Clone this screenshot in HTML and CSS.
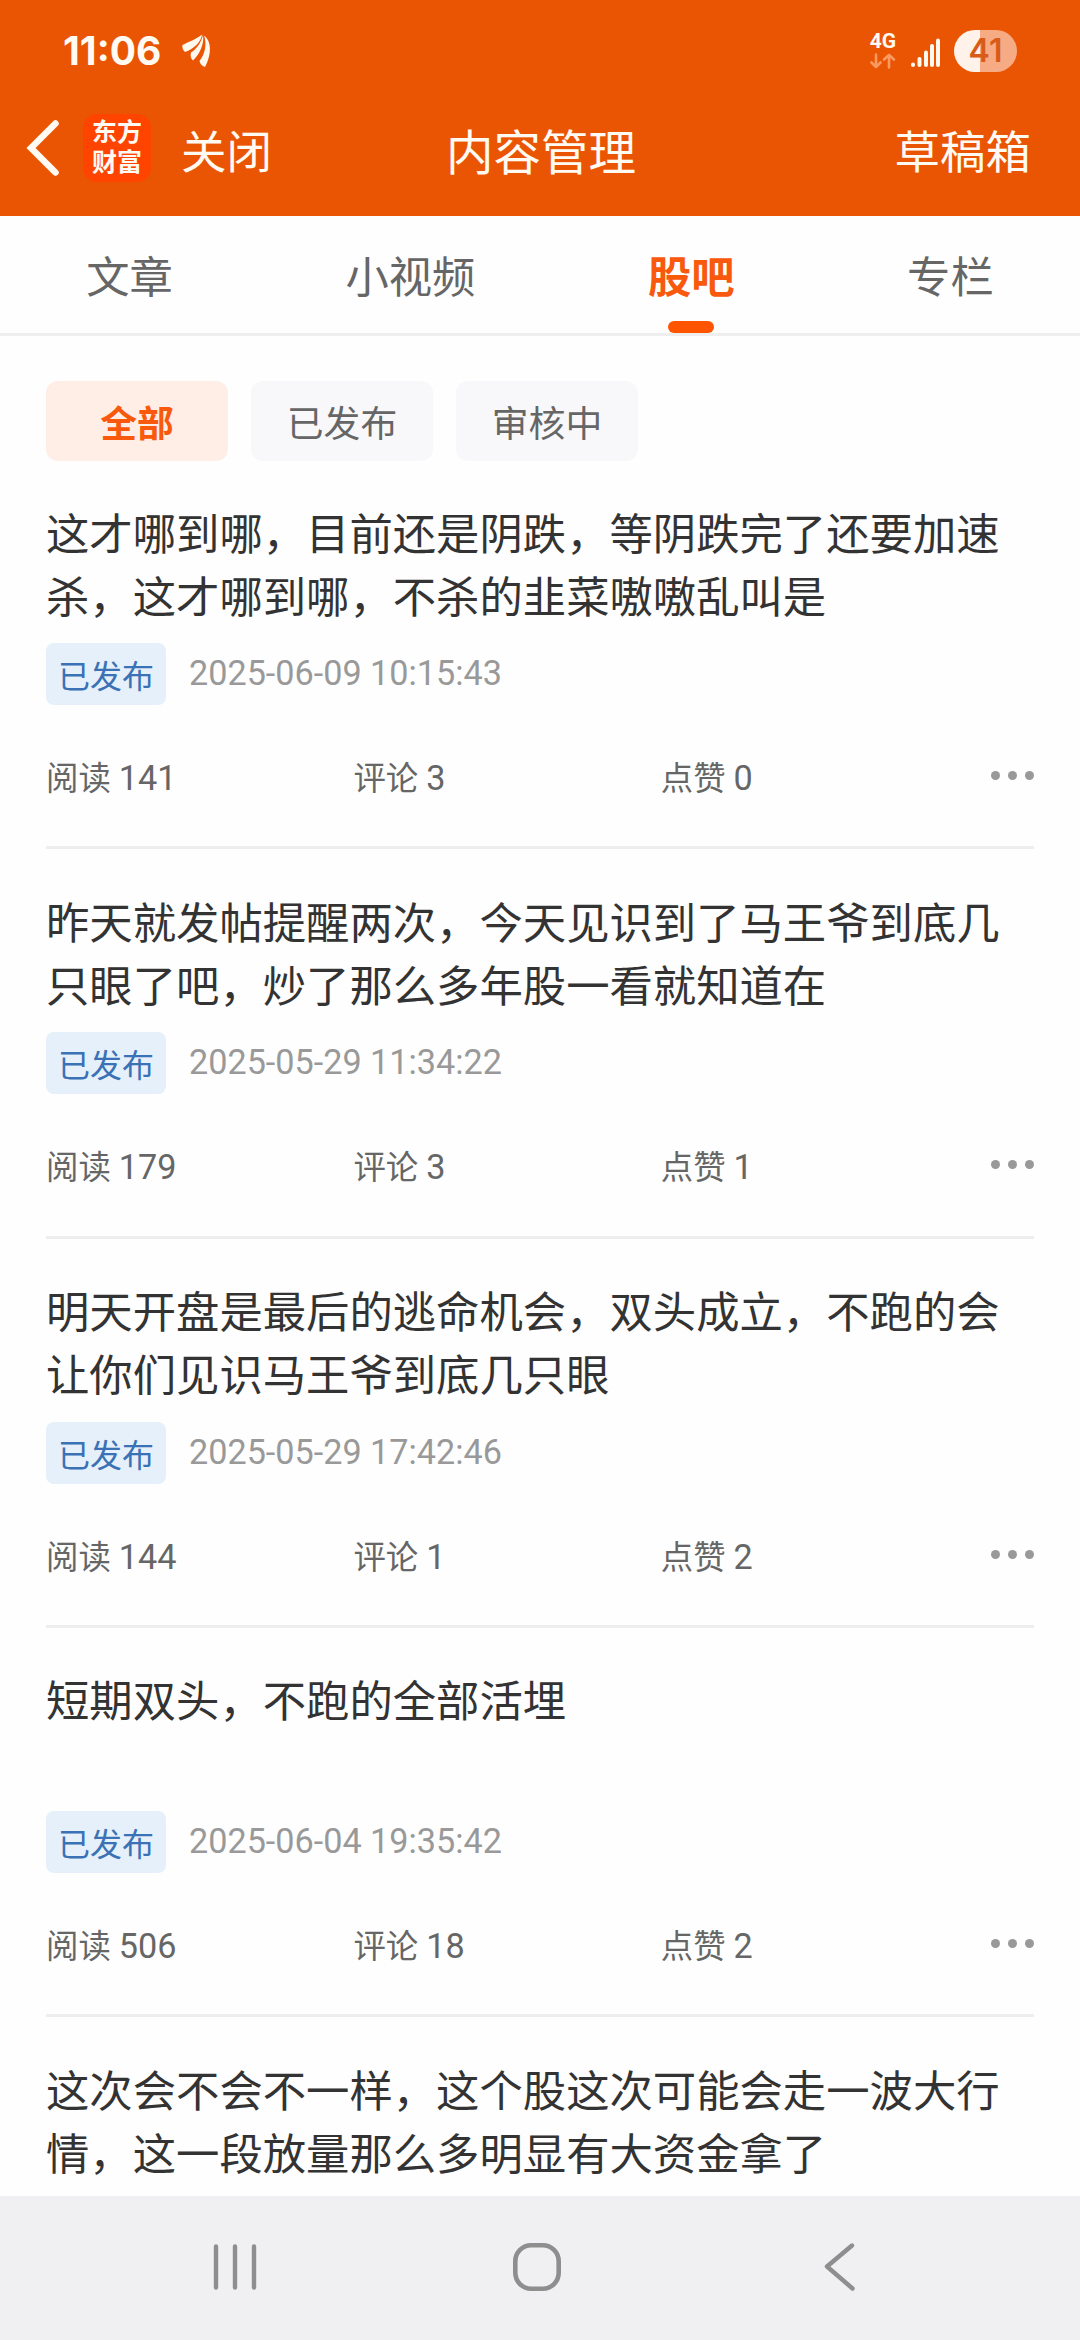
FILE: index.html
```html
<!DOCTYPE html>
<html lang="zh-CN">
<head>
    <meta charset="UTF-8">
    <meta name="viewport" content="width=device-width, initial-scale=1.0">
    <title>内容管理</title>
    <link rel="stylesheet" href="styles.css">
</head>
<body>
    <header class="header">
        <div class="status-bar">
            <span class="time">11:06</span>
            <svg class="plane" width="30" height="34" viewBox="0 0 30 34">
                <path fill="#fff8ee" d="M0.500 11C6 8 13 6 20 0.500C19 8 12 15 3 18C0.500 16 0 13 0.500 11Z"/>
                <path fill="#fff8ee" d="M21 1C22.500 9 18 20 11 26.500C9 25 8 22 9 18.500C14 15.500 19 9 21 1Z"/>
                <path fill="#fff8ee" d="M22.200 1.500C29.500 7 30 20 23 33C20 32 18 30 17.500 27C23 20 25 11 22.200 1.500Z"/>
            </svg>
            <div class="status-right">
                <div class="network">
                    <span>4G</span>
                    <svg width="26" height="16" viewBox="0 0 26 16" fill="none" stroke="#f99a62" stroke-width="2.6" stroke-linecap="round" stroke-linejoin="round">
                        <path d="M6 1.500V14M1.500 9.500L6 14L10.500 9.500"/>
                        <path d="M19 14.500V2M14 6.500L19 2L24 6.500"/>
                    </svg>
                </div>
                <svg class="signal" width="30" height="30" viewBox="0 0 30 30" fill="#fff8ee">
                    <rect x="0" y="24.500" width="4" height="4.500" rx="2"/>
                    <rect x="6.500" y="19" width="4" height="10" rx="2"/>
                    <rect x="13" y="12.500" width="4" height="16.500" rx="2"/>
                    <rect x="19" y="6" width="4" height="23" rx="2"/>
                    <rect x="25" y="0.500" width="4" height="28.500" rx="2"/>
                </svg>
                <div class="battery">41</div>
            </div>
        </div>
        <div class="title-bar">
            <div class="title-left">
                <svg width="34" height="58" viewBox="0 0 34 58" fill="none" stroke="#fffaf2" stroke-width="6.500" stroke-linecap="round" stroke-linejoin="miter">
                    <path d="M29.500 4.500L5 29L29.500 53.500"/>
                </svg>
                <div class="logo"><span>东方</span><span>财富</span></div>
                <span class="close">关闭</span>
            </div>
            <h1>内容管理</h1>
            <span class="drafts">草稿箱</span>
        </div>
    </header>

    <nav class="tabs">
        <span class="tab">文章</span>
        <span class="tab">小视频</span>
        <span class="tab active">股吧</span>
        <span class="tab">专栏</span>
    </nav>

    <main class="content">
        <div class="filters">
            <span class="filter active">全部</span>
            <span class="filter">已发布</span>
            <span class="filter">审核中</span>
        </div>

        <article class="post">
            <p class="post-title">这才哪到哪，目前还是阴跌，等阴跌完了还要加速杀，这才哪到哪，不杀的韭菜嗷嗷乱叫是</p>
            <div class="post-info"><span class="badge">已发布</span><span class="date">2025-06-09 10:15:43</span></div>
            <div class="stats">
                <span>阅读 <b>141</b></span><span>评论 <b>3</b></span><span>点赞 <b>0</b></span>
                <div class="more"><i></i><i></i><i></i></div>
            </div>
        </article>

        <article class="post">
            <p class="post-title">昨天就发帖提醒两次，今天见识到了马王爷到底几只眼了吧，炒了那么多年股一看就知道在</p>
            <div class="post-info"><span class="badge">已发布</span><span class="date">2025-05-29 11:34:22</span></div>
            <div class="stats">
                <span>阅读 <b>179</b></span><span>评论 <b>3</b></span><span>点赞 <b>1</b></span>
                <div class="more"><i></i><i></i><i></i></div>
            </div>
        </article>

        <article class="post">
            <p class="post-title">明天开盘是最后的逃命机会，双头成立，不跑的会让你们见识马王爷到底几只眼</p>
            <div class="post-info"><span class="badge">已发布</span><span class="date">2025-05-29 17:42:46</span></div>
            <div class="stats">
                <span>阅读 <b>144</b></span><span>评论 <b>1</b></span><span>点赞 <b>2</b></span>
                <div class="more"><i></i><i></i><i></i></div>
            </div>
        </article>

        <article class="post">
            <p class="post-title">短期双头，不跑的全部活埋</p>
            <div class="post-info"><span class="badge">已发布</span><span class="date">2025-06-04 19:35:42</span></div>
            <div class="stats">
                <span>阅读 <b>506</b></span><span>评论 <b>18</b></span><span>点赞 <b>2</b></span>
                <div class="more"><i></i><i></i><i></i></div>
            </div>
        </article>

        <article class="post">
            <p class="post-title">这次会不会不一样，这个股这次可能会走一波大行情，这一段放量那么多明显有大资金拿了</p>
        </article>
    </main>

    <footer class="nav-bar">
        <svg width="44" height="50" viewBox="0 0 44 50" stroke="#8e8e8e" stroke-width="4.400" stroke-linecap="round">
            <path d="M3 4.500V45.500M22 4.500V45.500M41 4.500V45.500"/>
        </svg>
        <svg class="home" width="50" height="50" viewBox="0 0 50 50" fill="none" stroke="#8e8e8e" stroke-width="4.600">
            <rect x="3.300" y="3.300" width="43.400" height="43.400" rx="16"/>
        </svg>
        <svg width="32" height="50" viewBox="0 0 32 50" fill="none" stroke="#8e8e8e" stroke-width="4.400" stroke-linecap="round" stroke-linejoin="round">
            <path d="M28 3.500L3 24.500L28.500 46.500"/>
        </svg>
    </footer>
</body>
</html>
```

FILE: styles.css
```css
* {
    box-sizing: border-box;
}

body {
    margin: 0;
    height: 2340px;
    display: flex;
    flex-direction: column;
    overflow: hidden;
    background-color: #fefefe;
    font-family: Roboto, "Noto Sans CJK SC", sans-serif;
    color: #333;
}

svg {
    display: block;
    flex-shrink: 0;
}

.header {
    height: 216px;
    flex-shrink: 0;
    background-color: #ea5504;
    color: #fffaf2;
}

/* status bar */
.status-bar {
    height: 102px;
    padding: 0 63px;
    display: flex;
    align-items: center;
}

.time {
    width: 119px;
    font-family: Inter, sans-serif;
    font-size: 39px;
    font-weight: 700;
    line-height: 60px;
}

.status-right {
    margin-left: auto;
    display: flex;
    align-items: center;
}

.network {
    width: 26px;
    margin-right: 15px;
    display: flex;
    flex-direction: column;
    align-items: center;
    gap: 3px;
    font-size: 21px;
    font-weight: 700;
    line-height: 17px;
}

.signal {
    margin: 4px 13px 0 0;
}

.battery {
    width: 63px;
    height: 42px;
    border-radius: 21px;
    background: linear-gradient(to right, #fff2ea 26px, #f6ab85 26px);
    color: #d85c18;
    font-family: Inter, sans-serif;
    font-size: 32px;
    font-weight: 600;
    line-height: 42px;
    text-align: center;
}

/* title bar */
.title-bar {
    height: 92px;
    padding: 0 49px 0 26px;
    display: grid;
    grid-template-columns: 1fr auto 1fr;
    align-items: center;
    font-size: 45.500px;
}

.title-left {
    display: flex;
    align-items: center;
}

.logo {
    width: 68px;
    height: 68px;
    margin-left: 23px;
    border-radius: 14px;
    background-color: #ff4400;
    display: flex;
    flex-direction: column;
    align-items: center;
    justify-content: center;
    font-size: 25px;
    font-weight: 700;
    line-height: 30px;
}

.close {
    margin: 12px 0 0 30px;
    line-height: 60px;
}

h1 {
    margin: 12px 0 0 25px;
    font-size: 47.500px;
    font-weight: 400;
    line-height: 60px;
}

.drafts {
    margin-top: 12px;
    text-align: right;
    line-height: 60px;
}

/* tabs */
.tabs {
    height: 120px;
    flex-shrink: 0;
    display: flex;
    justify-content: space-around;
    border-bottom: 3px solid #eee;
    font-size: 43.300px;
    color: #666;
}

.tab {
    height: 117px;
    display: flex;
    flex-direction: column;
    align-items: center;
    line-height: 125px;
}

.tab.active {
    color: #f8590c;
    font-weight: 700;
}

.tab.active::after {
    content: "";
    width: 46px;
    height: 12px;
    margin-top: -20px;
    border-radius: 6px;
    background-color: #ff5500;
}

/* list */
.content {
    flex: 1;
    min-height: 0;
    overflow: hidden;
    padding: 45px 46px 0;
}

.filters {
    height: 79px;
    display: flex;
    align-items: flex-start;
    gap: 23px;
}

.filter {
    width: 182px;
    height: 80px;
    border-radius: 12px;
    background-color: #f8f8fa;
    color: #666;
    font-size: 36.800px;
    line-height: 88px;
    text-align: center;
}

.filter.active {
    background-color: #ffeee6;
    color: #f8590c;
    font-weight: 700;
}

.post {
    height: 389.250px;
    padding-top: 43.500px;
    border-bottom: 3px solid #eee;
}

.post-title {
    height: 126px;
    margin: 0 0 13.500px;
    font-size: 43.350px;
    line-height: 63px;
}

.post-info {
    display: flex;
    gap: 23px;
}

.badge {
    width: 120px;
    height: 62px;
    border-radius: 8px;
    background-color: #e5f0fa;
    color: #3a72b5;
    font-size: 32px;
    line-height: 69px;
    text-align: center;
}

.date {
    color: #999;
    font-size: 34.200px;
    line-height: 60px;
}

.stats {
    margin-top: 48px;
    display: grid;
    grid-template-columns: 307.400px 307.400px 1fr auto;
    color: #666;
    font-size: 32.400px;
    line-height: 50px;
}

.stats b {
    font-size: 34.200px;
    font-weight: 400;
}

.more {
    display: flex;
    gap: 8px;
    padding-top: 18px;
}

.more i {
    width: 9px;
    height: 9px;
    border-radius: 50%;
    background-color: #999;
}

/* system navigation */
.nav-bar {
    height: 144px;
    flex-shrink: 0;
    padding: 0 224px 2px 213px;
    display: flex;
    justify-content: space-between;
    align-items: center;
    background-color: #f0f0f2;
}

.home {
    margin-right: 7px;
}
```
